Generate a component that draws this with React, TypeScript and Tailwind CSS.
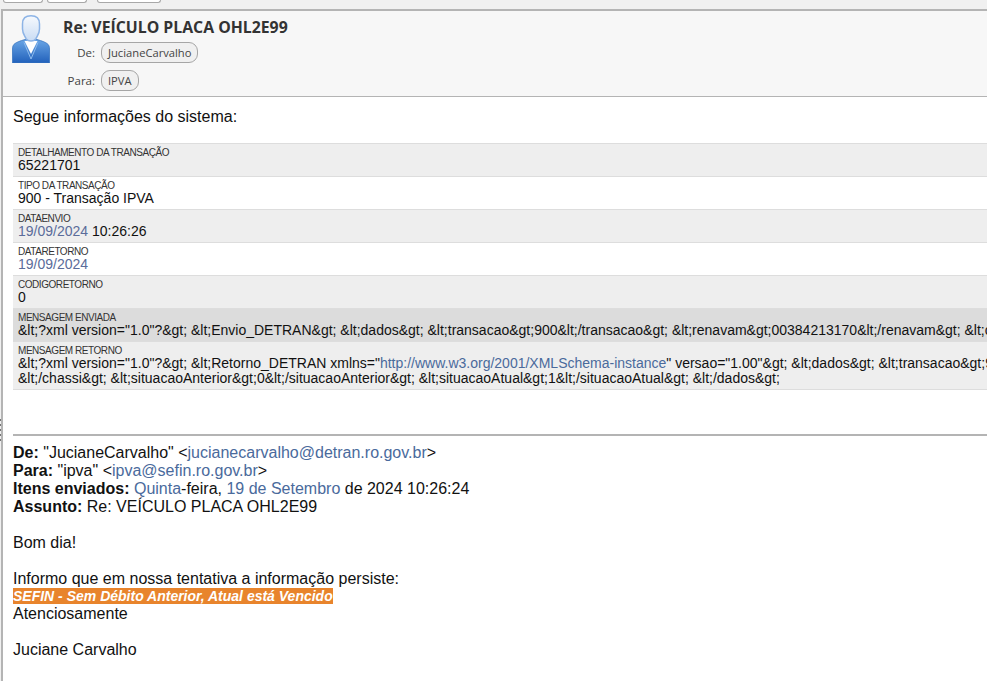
const rows = [
  { label: 'DETALHAMENTO DA TRANSAÇÃO', bg: 'bg-[#eeeeee]', value: <>65221701</> },
  { label: 'TIPO DA TRANSAÇÃO', bg: 'bg-white', value: <>900 - Transação IPVA</> },
  {
    label: 'DATAENVIO',
    bg: 'bg-[#eeeeee]',
    value: (
      <>
        <span className="text-[#5b6c9a]">19/09/2024</span> 10:26:26
      </>
    ),
  },
  { label: 'DATARETORNO', bg: 'bg-white', value: <span className="text-[#5b6c9a]">19/09/2024</span> },
  { label: 'CODIGORETORNO', bg: 'bg-[#eeeeee]', value: <>0</> },
  {
    label: 'MENSAGEM ENVIADA',
    bg: 'bg-[#dcdcdc]',
    value: (
      <>
        &amp;lt;?xml version="1.0"?&amp;gt; &amp;lt;Envio_DETRAN&amp;gt; &amp;lt;dados&amp;gt; &amp;lt;transacao&amp;gt;900&amp;lt;/transacao&amp;gt; &amp;lt;renavam&amp;gt;00384213170&amp;lt;/renavam&amp;gt; &amp;lt;chassi&amp;gt;
      </>
    ),
  },
  {
    label: 'MENSAGEM RETORNO',
    bg: 'bg-[#eeeeee]',
    value: (
      <>
        &amp;lt;?xml version="1.0"?&amp;gt; &amp;lt;Retorno_DETRAN xmlns="<span className="text-[#4a6a9c]">http://www.w3.org/2001/XMLSchema-instance</span>" versao="1.00"&amp;gt; &amp;lt;dados&amp;gt; &amp;lt;transacao&amp;gt;900&amp;lt;/transacao&amp;gt;
        <br />
        &amp;lt;/chassi&amp;gt; &amp;lt;situacaoAnterior&amp;gt;0&amp;lt;/situacaoAnterior&amp;gt; &amp;lt;situacaoAtual&amp;gt;1&amp;lt;/situacaoAtual&amp;gt; &amp;lt;/dados&amp;gt;
      </>
    ),
  },
]

function Avatar() {
  return (
    <svg width="38" height="48" viewBox="0 0 38 48" className="shrink-0">
      <defs>
        <linearGradient id="head" x1="0" y1="0" x2="0" y2="1">
          <stop offset="0" stopColor="#f6f9fd" />
          <stop offset="1" stopColor="#c9dcf4" />
        </linearGradient>
        <linearGradient id="suit" x1="0" y1="0" x2="0" y2="1">
          <stop offset="0" stopColor="#6aa6e6" />
          <stop offset="1" stopColor="#2261bb" />
        </linearGradient>
      </defs>
      <path d="M0.5 48 V34 C0.5 29 3 27.5 13 24.5 H25 C35 27.5 37.5 29 37.5 34 V48 Z" fill="url(#suit)" stroke="#3a76c0" strokeWidth="0.8" />
      <path d="M12.5 26 H25.5 L19 39 Z" fill="#ffffff" />
      <path d="M19 44 L12 27.5 M19 44 L26 27.5" stroke="#8fbcee" strokeWidth="1" fill="none" />
      <path d="M19 0.8 C24.5 0.8 27.5 3 27.5 9 V14 C27.5 19 25 21 24 23.5 C23 25.5 21 26 19 26 C17 26 15 25.5 14 23.5 C13 21 10.5 19 10.5 14 V9 C10.5 3 13.5 0.8 19 0.8 Z" fill="url(#head)" stroke="#8db4e6" strokeWidth="1.5" />
    </svg>
  )
}

function Chip({ children }: { children: string }) {
  return (
    <span className="flex h-[21px] items-center rounded-[9px] border border-[#a6a6a6] bg-[#f0f0f0] px-[6px] text-[11.2px] text-[#444444]">
      {children}
    </span>
  )
}

export default function App() {
  return (
    <div className="h-[681px] w-[987px] overflow-hidden bg-white font-['Liberation_Sans',Arial,sans-serif] text-[16px] leading-[18px] text-[#111111]">
      {/* barra de botões cortada no topo */}
      <div className="flex h-[9px] items-start bg-[#f0f0f0] pl-[3px]">
        <div className="h-[3px] w-[40px] rounded-b-[4px] border border-t-0 border-[#a8a8a8] bg-white" />
        <div className="ml-[4px] h-[3px] w-[40px] rounded-b-[4px] border border-t-0 border-[#a8a8a8] bg-white" />
        <div className="ml-[10px] h-[3px] w-[64px] rounded-b-[4px] border border-t-0 border-[#a8a8a8] bg-white" />
      </div>

      <div className="flex h-[672px] bg-[#f0f0f0]">
        {/* grip do divisor */}
        <div className="flex w-[1px] shrink-0 flex-col gap-[3px] pt-[410px]">
          <div className="h-[2px] bg-[#777777]" />
          <div className="h-[2px] bg-[#777777]" />
          <div className="h-[2px] bg-[#777777]" />
          <div className="h-[2px] bg-[#777777]" />
          <div className="h-[2px] bg-[#777777]" />
        </div>

        <div className="min-w-0 flex-1 border-t-2 border-l-2 border-[#b4b4b4] bg-white">
          <div className="flex h-[86px] border-b border-[#b4b4b4] bg-[#f7f7f7] font-['Open_Sans',sans-serif]">
            <div className="pt-[4px] pl-[9px]">
              <Avatar />
            </div>
            <div className="pl-[13px]">
              <div className="pt-[6px] text-[15.8px] leading-[20px] font-bold text-[#333333]">Re: VEÍCULO PLACA OHL2E99</div>
              <div className="mt-[5px] flex items-center">
                <span className="w-[32px] text-right text-[11.5px] text-[#444444]">De:</span>
                <span className="ml-[6px]">
                  <Chip>JucianeCarvalho</Chip>
                </span>
              </div>
              <div className="mt-[7px] flex items-center">
                <span className="w-[32px] text-right text-[11.5px] text-[#444444]">Para:</span>
                <span className="ml-[6px]">
                  <Chip>IPVA</Chip>
                </span>
              </div>
            </div>
          </div>

          <div className="pl-[10px]">
            <p className="pt-[11px] leading-[18px]">Segue informações do sistema:</p>

            <div className="mt-[17px] border-b border-[#dddddd] text-[14px] whitespace-nowrap">
              {rows.map((row) => (
                <div key={row.label} className={`border-t border-[#dddddd] pt-[4px] pb-[3px] pl-[5px] ${row.bg}`}>
                  <div className="text-[10px] leading-[10px] tracking-[-0.45px] text-[#333333]">{row.label}</div>
                  <div className="leading-[15px]">{row.value}</div>
                </div>
              ))}
            </div>

            <div className="mt-[44px] border-t-2 border-[#b4b4b4] pt-[8px]">
              <div>
                <b>De:</b> "JucianeCarvalho" &lt;<span className="text-[#4a6a9c]">jucianecarvalho@detran.ro.gov.br</span>&gt;
              </div>
              <div>
                <b>Para:</b> "ipva" &lt;<span className="text-[#4a6a9c]">ipva@sefin.ro.gov.br</span>&gt;
              </div>
              <div>
                <b>Itens enviados:</b> <span className="text-[#4a6a9c]">Quinta</span>-feira, <span className="text-[#4a6a9c]">19 de Setembro</span> de 2024 10:26:24
              </div>
              <div>
                <b>Assunto:</b> Re: VEÍCULO PLACA OHL2E99
              </div>
              <div className="mt-[18px]">Bom dia!</div>
              <div className="mt-[18px]">Informo que em nossa tentativa a informação persiste:</div>
              <div className="text-[14px] leading-[17px]">
                <span className="bg-[#e8842c] font-bold text-white italic">SEFIN - Sem Débito Anterior, Atual está Vencido</span>
              </div>
              <div>Atenciosamente</div>
              <div className="mt-[18px]">Juciane Carvalho</div>
            </div>
          </div>
        </div>
      </div>
    </div>
  )
}
